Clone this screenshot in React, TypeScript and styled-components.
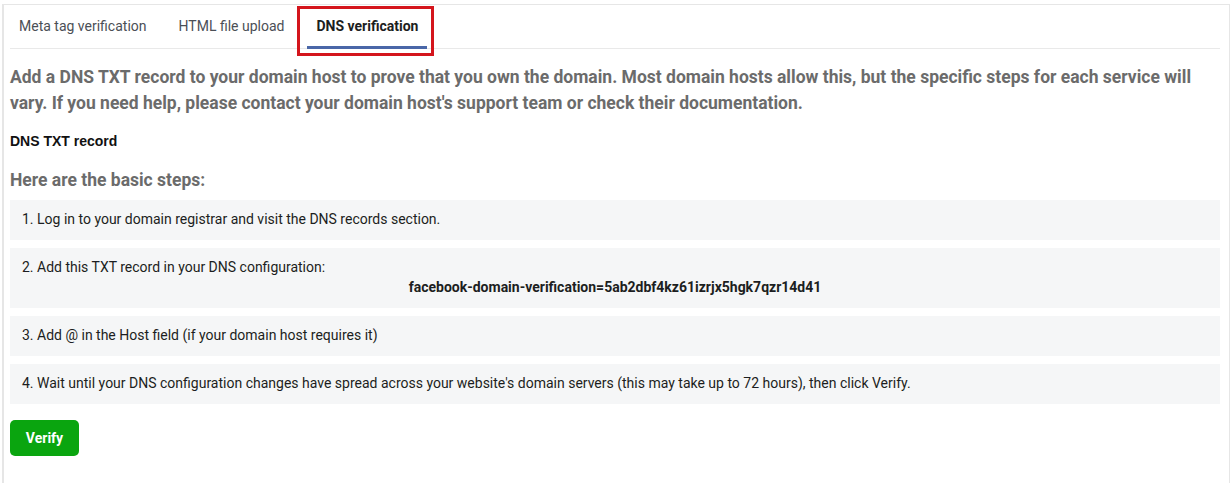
import React from "react";
import styled, { createGlobalStyle } from "styled-components";

const Global = createGlobalStyle`
  html, body { margin: 0; padding: 0; background: #fff; }
  body { font-family: Roboto, "Liberation Sans", Arial, sans-serif; }
  * { box-sizing: border-box; }
`;

const Panel = styled.div`
  margin: 4px 0 0 2px;
  width: 1228px;
  height: 479px;
  border: 1px solid #e6e6e6;
  border-bottom: none;
  border-left-width: 2px;
  padding: 0 9px 0 6px;
  overflow: hidden;
`;

const TabBar = styled.div`
  display: flex;
  gap: 14px;
  height: 44px;
  border-bottom: 1px solid #e9e9e9;
`;

const Tab = styled.div<{ $active?: boolean }>`
  position: relative;
  display: flex;
  align-items: center;
  padding: 0 9px;
  font-size: 14px;
  color: ${(p) => (p.$active ? "#1c1e21" : "#4b4f56")};
  font-weight: ${(p) => (p.$active ? 700 : 400)};
  border-bottom: 3px solid ${(p) => (p.$active ? "#4a67a8" : "transparent")};
  margin-bottom: -1px;
`;

const Highlight = styled.span`
  position: absolute;
  top: 1px;
  left: -10px;
  right: -7px;
  bottom: -10px;
  border: 3px solid #d4151c;
  pointer-events: none;
`;

const Intro = styled.p`
  margin: 15px 0 0;
  font-size: 17.5px;
  line-height: 26px;
  font-weight: 700;
  color: #6b6b6b;
`;

const Label = styled.div`
  margin-top: 16px;
  font-family: "Liberation Sans", Arial, sans-serif;
  font-size: 14px;
  font-weight: 700;
  line-height: 18px;
  color: #111;
`;

const StepsHeading = styled.h3`
  margin: 19px 0 0;
  font-size: 17.5px;
  line-height: 22px;
  font-weight: 700;
  color: #6b6b6b;
`;

const Steps = styled.div`
  margin-top: 9px;
  display: flex;
  flex-direction: column;
  gap: 8px;
`;

const Step = styled.div`
  background: #f5f6f7;
  padding: 11px 12px 12px;
  font-size: 14px;
  line-height: 17px;
  color: #1c1e21;
`;

const Record = styled.div`
  margin-top: 3px;
  text-align: center;
  font-weight: 700;
  font-size: 14px;
  line-height: 17px;
`;

const VerifyButton = styled.button`
  margin-top: 16px;
  width: 69px;
  height: 36px;
  border: none;
  border-radius: 5px;
  background: #0aa50f;
  color: #fff;
  font-family: Roboto, "Liberation Sans", Arial, sans-serif;
  font-size: 14px;
  font-weight: 700;
  cursor: pointer;
`;

export default function App() {
  return (
    <>
      <Global />
      <Panel>
        <TabBar>
          <Tab>Meta tag verification</Tab>
          <Tab>HTML file upload</Tab>
          <Tab $active>
            DNS verification
            <Highlight />
          </Tab>
        </TabBar>
        <Intro>
          Add a DNS TXT record to your domain host to prove that you own the domain. Most domain hosts allow this,
          but the specific steps for each service will vary. If you need help, please contact your domain host's
          support team or check their documentation.
        </Intro>
        <Label>DNS TXT record</Label>
        <StepsHeading>Here are the basic steps:</StepsHeading>
        <Steps>
          <Step>1. Log in to your domain registrar and visit the DNS records section.</Step>
          <Step>
            2. Add this TXT record in your DNS configuration:
            <Record>facebook-domain-verification=5ab2dbf4kz61izrjx5hgk7qzr14d41</Record>
          </Step>
          <Step>3. Add @ in the Host field (if your domain host requires it)</Step>
          <Step>
            4. Wait until your DNS configuration changes have spread across your website's domain servers (this may
            take up to 72 hours), then click Verify.
          </Step>
        </Steps>
        <VerifyButton>Verify</VerifyButton>
      </Panel>
    </>
  );
}
